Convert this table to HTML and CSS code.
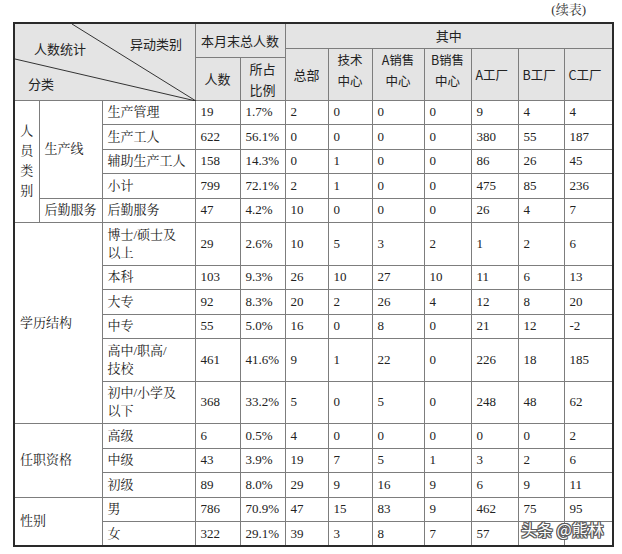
FILE: index.html
```html
<!DOCTYPE html>
<html lang="zh">
<head>
<meta charset="utf-8">
<title>人数统计（续表）</title>
<link rel="stylesheet" href="styles.css">
</head>
<body>
<div class="page">
  <div class="note">(续表)</div>
  <table class="grid">
    <colgroup>
      <col class="w25"><col class="w63"><col class="w93"><col class="w45"><col class="w45"><col class="w43"><col class="w44"><col class="w52"><col class="w47"><col class="w47"><col class="w46"><col class="w49">
    </colgroup>
    <tr class="ha">
      <td class="h corner" colspan="3" rowspan="3">
        <svg class="diag" width="181" height="77" viewBox="0 0 181 77">
          <line x1="57" y1="0" x2="181" y2="77" stroke="#333" stroke-width="1"/>
          <line x1="0" y1="35" x2="181" y2="77" stroke="#333" stroke-width="1"/>
        </svg>
        <span class="lab lab1">人数统计</span>
        <span class="lab lab2">异动类别</span>
        <span class="lab lab3">分类</span>
      </td>
      <td class="h" colspan="2" rowspan="2">本月末总人数</td>
      <td class="h" colspan="7">其中</td>
    </tr>
    <tr class="hb">
      <td class="h" rowspan="2">总部</td>
      <td class="h hs up" rowspan="2">技术<br>中心</td>
      <td class="h hs up" rowspan="2">A销售<br>中心</td>
      <td class="h hs up" rowspan="2">B销售<br>中心</td>
      <td class="h hs hl" rowspan="2">A工厂</td>
      <td class="h hs hl" rowspan="2">B工厂</td>
      <td class="h hs hl" rowspan="2">C工厂</td>
    </tr>
    <tr class="hc">
      <td class="h">人数</td>
      <td class="h">所占<br>比例</td>
    </tr>

    <tr class="r">
      <td class="v" rowspan="5">人<br>员<br>类<br>别</td>
      <td rowspan="4">生产线</td>
      <td>生产管理</td><td>19</td><td>1.7%</td><td>2</td><td>0</td><td>0</td><td>0</td><td>9</td><td>4</td><td>4</td>
    </tr>
    <tr class="r">
      <td>生产工人</td><td>622</td><td>56.1%</td><td>0</td><td>0</td><td>0</td><td>0</td><td>380</td><td>55</td><td>187</td>
    </tr>
    <tr class="r">
      <td>辅助生产工人</td><td>158</td><td>14.3%</td><td>0</td><td>1</td><td>0</td><td>0</td><td>86</td><td>26</td><td>45</td>
    </tr>
    <tr class="r">
      <td>小计</td><td>799</td><td>72.1%</td><td>2</td><td>1</td><td>0</td><td>0</td><td>475</td><td>85</td><td>236</td>
    </tr>
    <tr class="r">
      <td>后勤服务</td>
      <td>后勤服务</td><td>47</td><td>4.2%</td><td>10</td><td>0</td><td>0</td><td>0</td><td>26</td><td>4</td><td>7</td>
    </tr>

    <tr class="r2">
      <td colspan="2" rowspan="6">学历结构</td>
      <td>博士/硕士及<br>以上</td><td>29</td><td>2.6%</td><td>10</td><td>5</td><td>3</td><td>2</td><td>1</td><td>2</td><td>6</td>
    </tr>
    <tr class="r">
      <td>本科</td><td>103</td><td>9.3%</td><td>26</td><td>10</td><td>27</td><td>10</td><td>11</td><td>6</td><td>13</td>
    </tr>
    <tr class="r">
      <td>大专</td><td>92</td><td>8.3%</td><td>20</td><td>2</td><td>26</td><td>4</td><td>12</td><td>8</td><td>20</td>
    </tr>
    <tr class="r">
      <td>中专</td><td>55</td><td>5.0%</td><td>16</td><td>0</td><td>8</td><td>0</td><td>21</td><td>12</td><td>-2</td>
    </tr>
    <tr class="r2">
      <td>高中/职高/<br>技校</td><td>461</td><td>41.6%</td><td>9</td><td>1</td><td>22</td><td>0</td><td>226</td><td>18</td><td>185</td>
    </tr>
    <tr class="r2">
      <td>初中/小学及<br>以下</td><td>368</td><td>33.2%</td><td>5</td><td>0</td><td>5</td><td>0</td><td>248</td><td>48</td><td>62</td>
    </tr>

    <tr class="r">
      <td colspan="2" rowspan="3">任职资格</td>
      <td>高级</td><td>6</td><td>0.5%</td><td>4</td><td>0</td><td>0</td><td>0</td><td>0</td><td>0</td><td>2</td>
    </tr>
    <tr class="r">
      <td>中级</td><td>43</td><td>3.9%</td><td>19</td><td>7</td><td>5</td><td>1</td><td>3</td><td>2</td><td>6</td>
    </tr>
    <tr class="r">
      <td>初级</td><td>89</td><td>8.0%</td><td>29</td><td>9</td><td>16</td><td>9</td><td>6</td><td>9</td><td>11</td>
    </tr>

    <tr class="r">
      <td colspan="2" rowspan="2">性别</td>
      <td>男</td><td>786</td><td>70.9%</td><td>47</td><td>15</td><td>83</td><td>9</td><td>462</td><td>75</td><td>95</td>
    </tr>
    <tr class="r">
      <td>女</td><td>322</td><td>29.1%</td><td>39</td><td>3</td><td>8</td><td>7</td><td>57</td><td></td><td></td>
    </tr>
  </table>
  <div class="watermark">头条 @熊林</div>
</div>
</body>
</html>
```
FILE: styles.css
```css
html, body {
  margin: 0;
  padding: 0;
  background: #ffffff;
}

.page {
  position: relative;
  width: 622px;
  height: 554px;
  overflow: hidden;
  font-family: "Liberation Serif", "Noto Serif CJK SC", "Noto Sans CJK SC", serif;
  font-size: 13px;
  color: #222222;
}

.note {
  height: 22px;
  line-height: 20px;
  text-align: right;
  padding-right: 36px;
  font-size: 13px;
  color: #333333;
}

.grid {
  margin-left: 13px;
  border-collapse: collapse;
  table-layout: fixed;
  width: 600px;
  border: 2px solid #2a2a2a;
}

.w25 { width: 25px; }
.w63 { width: 63px; }
.w93 { width: 93px; }
.w45 { width: 45px; }
.w43 { width: 43px; }
.w44 { width: 44px; }
.w52 { width: 52px; }
.w47 { width: 47px; }
.w46 { width: 46px; }
.w49 { width: 49px; }

.grid td {
  border: 1px solid #7d7d7d;
  padding: 0 5px;
  vertical-align: middle;
  line-height: 18px;
  white-space: nowrap;
  overflow: hidden;
}

.ha { height: 25px; }
.hb { height: 9px; }
.hc { height: 43px; }
.r { height: 24.5px; }
.r2 { height: 42.5px; }

.grid td.h {
  background: #e4e4e4;
  font-family: "Noto Sans CJK SC", "Liberation Sans", sans-serif;
  font-size: 13px;
  line-height: 21px;
  text-align: center;
  padding: 0;
  color: #222222;
}

.grid td.hs { font-size: 12.5px; }
.grid td.up { padding-bottom: 8px; }
.grid td.hl { text-align: left; padding-left: 4px; }

.grid td.corner {
  position: relative;
  overflow: visible;
}

.diag {
  position: absolute;
  left: 0;
  top: 0;
  display: block;
}

.lab {
  position: absolute;
  line-height: 13px;
  font-size: 13px;
}

.lab1 { left: 19px; top: 18px; }
.lab2 { left: 115px; top: 13px; }
.lab3 { left: 13px; top: 53px; }

.grid td.v {
  text-align: center;
  line-height: 20px;
  padding: 0;
}

.watermark {
  position: absolute;
  left: 521px;
  top: 520px;
  font-family: "Noto Sans CJK SC", sans-serif;
  font-size: 16px;
  line-height: 19px;
  color: #ffffff;
  text-shadow: 1px 0 0 #5a5a5a, -1px 0 0 #5a5a5a, 0 1px 0 #5a5a5a, 0 -1px 0 #5a5a5a, 1px 1px 0 #5a5a5a, -1px -1px 0 #5a5a5a, 1px -1px 0 #5a5a5a, -1px 1px 0 #5a5a5a;
}
```
